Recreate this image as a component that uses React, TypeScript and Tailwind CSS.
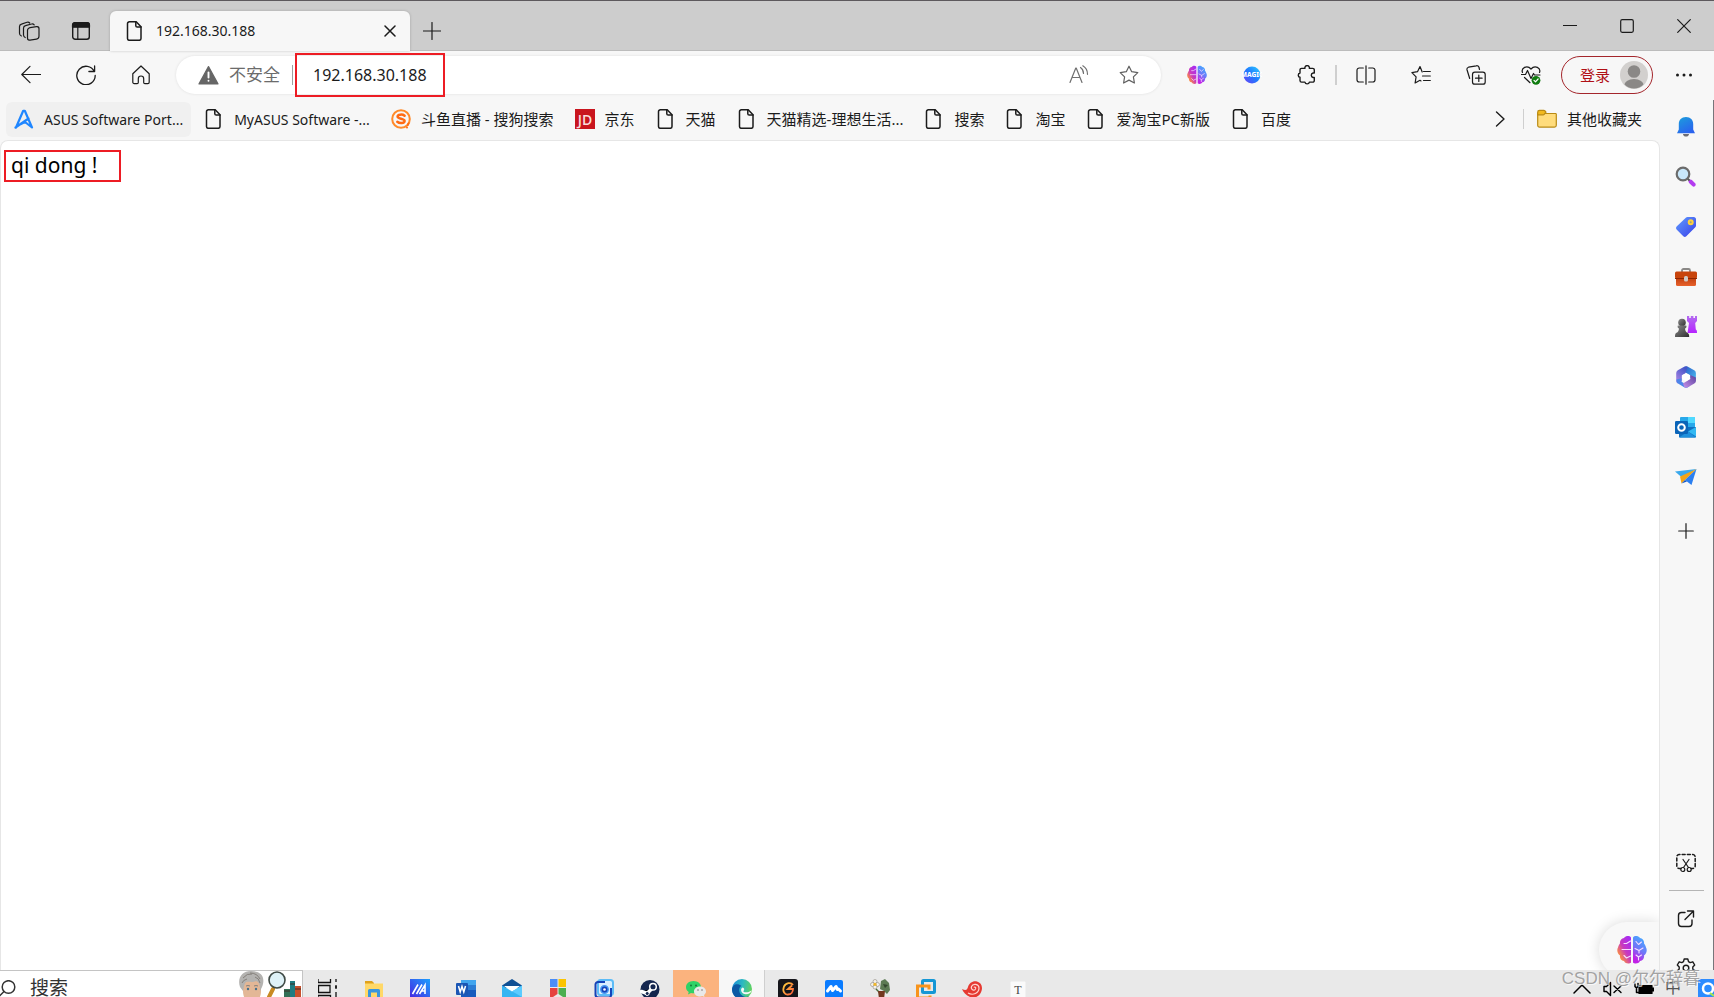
import type { ReactNode } from "react";

type IconProps = { children: ReactNode; className?: string; box?: string };

function Icon({ children, className = "size-5", box = "0 0 20 20" }: IconProps) {
  return (
    <svg
      viewBox={box}
      className={`shrink-0 ${className}`}
      fill="none"
      stroke="currentColor"
      strokeWidth="1.2"
      strokeLinecap="round"
      strokeLinejoin="round"
      aria-hidden="true"
    >
      {children}
    </svg>
  );
}

function FileIcon() {
  return (
    <Icon>
      <path strokeWidth="1.5" d="M4.4 .8h6.8l4.8 5v11.600a1.900 1.900 0 0 1-1.900 1.900H4.400a1.900 1.900 0 0 1-1.900-1.900V2.700A1.900 1.900 0 0 1 4.400.8z" />
      <path strokeWidth="1.5" d="M10.800 1v3.700c0 .8.6 1.400 1.400 1.400H16" />
    </Icon>
  );
}

function BrainIcon({ id, className }: { id: string; className: string }) {
  return (
    <Icon className={className} box="0 0 30 30">
      <defs>
        <linearGradient id={`${id}-l`} x1="0.9" y1="0.1" x2="0.2" y2="0.9">
          <stop offset="0" stopColor="#a82cf2" />
          <stop offset="0.5" stopColor="#c838c0" />
          <stop offset="0.9" stopColor="#f98a48" />
        </linearGradient>
        <linearGradient id={`${id}-r`} x1="0.7" y1="0" x2="0.3" y2="1">
          <stop offset="0.1" stopColor="#4aa3ff" />
          <stop offset="0.5" stopColor="#6f78f8" />
          <stop offset="0.9" stopColor="#c022e6" />
        </linearGradient>
      </defs>
      <path stroke="none" fill={`url(#${id}-l)`} d="M14 2.5v25C12.500 29 8.500 29 7 26 4 25.500 2.500 23 3 20.500.500 19-.5 15 1 12.500 1.500 10.500 2.500 9 3 8.500 2.500 5.500 4.500 3.500 7 3 9 .5 12.500.5 14 2.500z" />
      <path stroke="none" fill={`url(#${id}-r)`} d="M16 2.500v25c1.500 1.500 5.500 1.500 7-1.500 3-.5 4.500-3 4-5.500 2.500-1.500 3.500-5.500 2-8-.5-2-1.500-3.500-2-4 .5-3-1.500-5-4-5.500-2-2.500-5.500-2.500-7-.5z" />
      <g stroke="#f7dcff" strokeWidth="1.100">
        <path d="M7 8.500h2.500L13.500 6M5 14.500h8.500M7 20.500l2.500 2.500 4-2" />
        <path d="M19 6.500l2.500 3 3-2.500M18 13.500l4 2 4-2.500M22 15.500v2.500M19 20l2.500 2 3-2M21.500 22v3" />
      </g>
    </Icon>
  );
}

function WorkspacesIcon() {
  return (
    <Icon className="size-[22px]" box="0 0 22 22">
      <rect x="9.500" y="7" width="11.500" height="12.500" rx="2.500" transform="skewY(-9) translate(0 2.500)" />
      <path d="M7.200 17.500A3 3 0 0 1 5.500 15V8.200a2.600 2.600 0 0 1 2-2.500l6-1.700a2.500 2.500 0 0 1 2.700.8" />
      <path d="M3.400 16A3 3 0 0 1 1.500 13.200V6.600a2.600 2.600 0 0 1 2-2.500l5.500-1.800a2.500 2.500 0 0 1 2.700.7" />
    </Icon>
  );
}

function TabsIcon() {
  return (
    <Icon>
      <rect x="1.700" y="1.700" width="16.600" height="16.600" rx="2.500" strokeWidth="1.400" />
      <path d="M1.500 6.200V4A2.500 2.500 0 0 1 4 1.500h12A2.500 2.500 0 0 1 18.500 4v2.200z" fill="currentColor" />
      <path d="M6.800 6v12" />
    </Icon>
  );
}

function TitleBar() {
  return (
    <header className="flex h-[51px] shrink-0 border-t border-b border-t-[#5d595d] border-b-[#bcbcbc] bg-[#cdcdcd]">
      <button aria-label="工作区" className="ml-[3px] flex w-[51px] items-center justify-center pt-2.5">
        <WorkspacesIcon />
      </button>
      <button aria-label="标签页操作" className="flex w-[54px] items-center justify-center pt-2.5">
        <TabsIcon />
      </button>
      <div className="relative mt-[10px] -mb-px ml-0.5 flex w-[300px] items-center rounded-t-md bg-[#f7f7f7] pr-2 pb-px pl-[15px] shadow-[0_0_3px_#0003]">
        <FileIcon />
        <span className="ml-[11px] flex-1 text-[14px]">192.168.30.188</span>
        <button aria-label="关闭标签页" className="flex size-6 items-center justify-center">
          <Icon className="size-3" box="0 0 12 12">
            <path strokeWidth="1.500" d="M1 1l10 10M11 1L1 11" />
          </Icon>
        </button>
      </div>
      <button aria-label="新建标签页" className="flex w-11 items-center justify-center pt-2.5">
        <Icon className="size-[18px]" box="0 0 18 18">
          <path d="M9 .5v17M.5 9h17" />
        </Icon>
      </button>
      <div className="mr-0.5 ml-auto flex">
        <button aria-label="最小化" className="flex w-[57px] items-center justify-center">
          <Icon className="size-[14px]" box="0 0 14 14"><path d="M.5 6.500h13" /></Icon>
        </button>
        <button aria-label="最大化" className="flex w-[57px] items-center justify-center">
          <Icon className="size-[14px]" box="0 0 14 14"><rect x=".7" y=".7" width="12.600" height="12.600" rx="1.500" /></Icon>
        </button>
        <button aria-label="关闭" className="flex w-[57px] items-center justify-center">
          <Icon className="size-[14px]" box="0 0 14 14"><path d="M.7.7l12.600 12.600M13.300.7L.7 13.300" /></Icon>
        </button>
      </div>
    </header>
  );
}

function ToolButton({ label, children }: { label: string; children: ReactNode }) {
  return (
    <button aria-label={label} className="flex h-[38px] w-[55px] shrink-0 items-center justify-center">
      {children}
    </button>
  );
}

function AddressBar() {
  return (
    <div className="relative ml-2 flex h-[38px] flex-1 items-center rounded-full bg-white pl-[22px] shadow-[0_0_3px_#0000001a]">
      <Icon className="size-[21px]" box="0 0 20 20">
        <path fill="#666" stroke="#666" d="M10 1.500L19 18H1z" />
        <path stroke="#fff" strokeWidth="1.800" d="M10 7v5M10 15v.1" />
      </Icon>
      <label htmlFor="url" className="ml-2.5 text-[17px] text-[#6b6b6b]">不安全</label>
      <span className="ml-3 h-5 w-px bg-[#a0a0a0]" />
      <input id="url" defaultValue="192.168.30.188" className="ml-5 min-w-0 flex-1 bg-transparent text-[16px] outline-none" />
      <span className="pointer-events-none absolute -top-[3px] left-[119px] h-[44px] w-[150px] border-2 border-[#ed1c24]" />
      <button aria-label="朗读此页内容" className="flex w-[50px] justify-center text-[#707070]">
        <Icon>
          <path d="M1 17.500L6.800 3h.4L13 17.500M3.200 12.500h7.600M11.500 2.500q3 2 3 6M13.800 .8q4.700 2.700 4.700 8.500" />
        </Icon>
      </button>
      <button aria-label="将此页添加到收藏夹" className="mr-[7px] flex w-[50px] justify-center text-[#606060]">
        <Icon>
          <path d="M10 1.200l2.700 5.500 6.100.9-4.400 4.300 1 6.100L10 15.100 4.600 18l1-6.100L1.200 7.600l6.100-.9z" />
        </Icon>
      </button>
    </div>
  );
}

function Toolbar() {
  return (
    <div className="flex h-[49px] shrink-0 items-start pt-[5px] pr-[3px] pl-[3px]">
      <ToolButton label="返回">
        <Icon><path d="M19.500 9.500H.8M9 1.300L.8 9.500 9 17.700" /></Icon>
      </ToolButton>
      <ToolButton label="刷新">
        <Icon><path strokeWidth="1.300" d="M18.300 6.500A9.200 9.200 0 1 0 19.200 10.500M18.600 1v5.500h-5.700" /></Icon>
      </ToolButton>
      <ToolButton label="主页">
        <Icon><path d="M1.800 8.800L10 1l8.200 7.800v8.400c0 .8-.6 1.400-1.400 1.400h-2.900c-.7 0-1.200-.5-1.200-1.200v-3.700a2.700 2.700 0 0 0-5.400 0v3.700c0 .7-.5 1.200-1.200 1.200H3.200c-.8 0-1.400-.6-1.400-1.400z" /></Icon>
      </ToolButton>
      <AddressBar />
      <div className="ml-2 flex">
        <ToolButton label="扩展 AI">
          <BrainIcon id="ext" className="size-5" />
        </ToolButton>
        <ToolButton label="Magic">
          <Icon>
            <defs>
              <linearGradient id="magic" x1="1" y1="0" x2="0" y2="1">
                <stop offset="0" stopColor="#2fd0ff" />
                <stop offset=".5" stopColor="#1f7bff" />
                <stop offset="1" stopColor="#6a3df5" />
              </linearGradient>
            </defs>
            <circle cx="10" cy="10" r="8.500" fill="url(#magic)" stroke="none" />
            <text x="10" y="12.300" textAnchor="middle" fontSize="6.500" fontWeight="800" fill="#fff" stroke="none">MAGIC</text>
          </Icon>
        </ToolButton>
        <ToolButton label="扩展">
          <Icon>
            <path strokeWidth="1.400" d="M4.600 3.400h3.300a2.300 2.300 0 1 1 4.500 0h3.300a1.600 1.600 0 0 1 1.600 1.600v3h-1.200a2.300 2.300 0 0 0 0 4.500h1.200v3a1.600 1.600 0 0 1-1.600 1.600h-3.300a2.300 2.300 0 0 1-4.500 0H4.600A1.600 1.600 0 0 1 3 15.500v-3.200a2.200 2.200 0 0 1 0-4.300V5a1.600 1.600 0 0 1 1.600-1.600z" />
          </Icon>
        </ToolButton>
        <span className="mx-px mt-[9px] h-5 w-0.5 bg-[#cfcfcf]" />
        <ToolButton label="分屏">
          <Icon><path d="M7.300 3H3.200A2.200 2.200 0 0 0 1 5.200v9.600A2.200 2.200 0 0 0 3.200 17h4.100M12.700 3h4.100A2.200 2.200 0 0 1 19 5.200v9.600a2.200 2.200 0 0 1-2.200 2.200h-4.100M10 .8v18.400" /></Icon>
        </ToolButton>
        <ToolButton label="收藏夹">
          <Icon><path d="M11.200 7L9 1.500 6.500 6.700.9 7.600l4.200 4.200-1 6.200L9 15.300l1 .6M12.500 6.500h6.800M11.500 11h7.800M12.500 15.500h6.800" /></Icon>
        </ToolButton>
        <ToolButton label="集锦">
          <Icon>
            <rect x="6.500" y="7.200" width="12.700" height="12" rx="2.300" />
            <path d="M12.800 10v6.500M9.500 13.200h6.600M3.700 13.500L1 4.700a2.200 2.200 0 0 1 1.500-2.500L10.300.8a2.200 2.200 0 0 1 2.700 1.700l.5 2" />
          </Icon>
        </ToolButton>
        <ToolButton label="浏览器概要">
          <Icon>
            <path d="M1.500 7.500C-.2 3 6 -.6 10 4c4-4.600 10.200-1 8.500 3.500M.5 9.500h4l2-4 3.500 8 2.500-5 1 1.500h5.500M3.500 12.500l5.500 5.200" />
            <circle cx="15" cy="15.300" r="4.400" fill="#107c10" stroke="none" />
            <path stroke="#fff" d="M13 15.400l1.500 1.400 2.600-2.800" />
          </Icon>
        </ToolButton>
      </div>
      <button className="ml-[3px] flex h-[38px] w-[92px] shrink-0 items-center justify-between rounded-full border border-[#a4262c] pr-1 pl-[18px] text-[15px] text-[#b01015]">
        登录
        <svg viewBox="0 0 28 28" className="size-7" aria-hidden="true">
          <defs><clipPath id="avatar"><circle cx="14" cy="14" r="13.500" /></clipPath></defs>
          <circle cx="14" cy="14" r="14" fill="#d2d0ce" />
          <circle cx="14" cy="10.500" r="6.300" fill="#8a8886" />
          <ellipse cx="14" cy="25" rx="10" ry="7" fill="#8a8886" clipPath="url(#avatar)" />
        </svg>
      </button>
      <span className="w-[3px]" />
      <ToolButton label="设置及其他">
        <Icon><g fill="currentColor" stroke="none"><circle cx="3.500" cy="10" r="1.500" /><circle cx="10" cy="10" r="1.500" /><circle cx="16.500" cy="10" r="1.500" /></g></Icon>
      </ToolButton>
    </div>
  );
}

const asus = (
  <Icon>
    <path stroke="#1f86ff" strokeWidth="2.200" d="M2 18.500L9.200 1.800h1.600L18 18.500l-7-5.500M1.500 18.500L14.500 9.500M5.500 15.700l5.500-2.700" />
  </Icon>
);

const sogou = (
  <Icon>
    <circle cx="10" cy="10" r="8.800" stroke="#ff8a2a" strokeWidth="2" />
    <path stroke="#ff6a13" strokeWidth="2.500" d="M13.600 6.700C11.500 5 6.500 5.200 6.600 7.800c.1 2.400 7 1.600 7 4.200 0 2.500-5.200 2.600-7.300.8" />
    <path stroke="#ff6a13" strokeWidth="2" d="M17.500 14.500l-.6 1.500M16 18.500v.1" />
  </Icon>
);

const jd = (
  <svg viewBox="0 0 20 20" className="size-5 shrink-0" aria-hidden="true">
    <rect width="20" height="20" fill="#c9151e" />
    <text x="10" y="15.500" textAnchor="middle" fontSize="14" fontWeight="600" fill="#f9dcdd" fontFamily="Open Sans, sans-serif">JD</text>
  </svg>
);

const bookmarks: { label: string; icon?: ReactNode; latin?: boolean; active?: boolean }[] = [
  { label: "ASUS Software Port...", icon: asus, latin: true, active: true },
  { label: "MyASUS Software -...", latin: true },
  { label: "斗鱼直播 - 搜狗搜索", icon: sogou },
  { label: "京东", icon: jd },
  { label: "天猫" },
  { label: "天猫精选-理想生活..." },
  { label: "搜索" },
  { label: "淘宝" },
  { label: "爱淘宝PC新版" },
  { label: "百度" },
];

function BookmarksBar() {
  return (
    <nav className="flex h-10 shrink-0 items-center gap-[5px] pb-0.5 pl-1.5">
      {bookmarks.map((b) => (
        <a
          key={b.label}
          href="#"
          className={`flex h-[35px] shrink-0 items-center gap-2.5 rounded-md px-2 whitespace-nowrap ${b.latin ? "text-[14px]" : "text-[15px]"} ${b.active ? "bg-[#f0f0f0]" : ""}`}
        >
          {b.icon ?? <FileIcon />}
          {b.label}
        </a>
      ))}
      <button aria-label="更多收藏" className="ml-auto flex w-9 justify-center">
        <Icon className="size-4" box="0 0 16 16"><path strokeWidth="1.400" d="M4.500 1l7.500 7-7.500 7" /></Icon>
      </button>
      <span className="h-5 w-px bg-[#cfcfcf]" />
      <a href="#" className="mr-[10px] flex h-[35px] items-center gap-2.5 px-2 text-[15px]">
        <Icon>
          <path fill="#ffdc7c" stroke="#b98a14" d="M.7 4.500h18a.8.8 0 0 1 .6.8v11a1.800 1.800 0 0 1-1.800 1.800h-15A1.800 1.800 0 0 1 .7 16.300z" />
          <path fill="#f2b91d" stroke="#b98a14" d="M.7 5.800V3.200A1.800 1.800 0 0 1 2.500 1.400h4.200c.6 0 1 .2 1.400.6L9 3.200 7.200 5.300a1.500 1.500 0 0 1-1.100.5z" />
        </Icon>
        其他收藏夹
      </a>
    </nav>
  );
}

function SideButton({ label, children }: { label: string; children: ReactNode }) {
  return (
    <button aria-label={label} className="flex h-[50px] w-full shrink-0 items-center justify-center">
      <svg viewBox="0 0 22 22" className="size-[22px]" aria-hidden="true">{children}</svg>
    </button>
  );
}

function Sidebar() {
  return (
    <aside className="flex w-[54px] shrink-0 flex-col overflow-hidden border-r border-[#77757a] pt-0.5 pr-px">
      <svg className="absolute size-0" aria-hidden="true">
        <defs>
          <linearGradient id="bell" x1="0" y1="0" x2=".6" y2="1"><stop offset="0" stopColor="#1ba0dc" /><stop offset="1" stopColor="#2a63ee" /></linearGradient>
          <linearGradient id="tag" x1="0" y1="0" x2="1" y2="1"><stop offset="0" stopColor="#5f9dff" /><stop offset="1" stopColor="#3a3fe8" /></linearGradient>
          <linearGradient id="box" x1="0" y1="0" x2="0" y2="1"><stop offset="0" stopColor="#b83808" /><stop offset="1" stopColor="#e8622c" /></linearGradient>
          <linearGradient id="rook" x1="0" y1="0" x2="0" y2="1"><stop offset="0" stopColor="#b36bf0" /><stop offset="1" stopColor="#b624ff" /></linearGradient>
          <linearGradient id="pawn" x1="0" y1="0" x2="1" y2="1"><stop offset="0" stopColor="#8a8a8a" /><stop offset="1" stopColor="#2f2f2f" /></linearGradient>
          <linearGradient id="m365-a" x1="0" y1="1" x2=".6" y2="0"><stop offset="0" stopColor="#b88be8" /><stop offset="1" stopColor="#4656c8" /></linearGradient>
          <linearGradient id="m365-b" x1="0" y1="0" x2="1" y2="1"><stop offset="0" stopColor="#2a58c8" /><stop offset="1" stopColor="#4cc0f0" /></linearGradient>
          <linearGradient id="m365-c" x1="0" y1="1" x2="1" y2="0"><stop offset="0" stopColor="#c792ea" /><stop offset="1" stopColor="#5a3f9e" /></linearGradient>
        </defs>
      </svg>
      <SideButton label="通知">
        <path fill="url(#bell)" d="M11 1c4.500 0 7.200 3.200 7.200 7v5.500l1.800 3.700H2l1.800-3.700V8C3.800 4.200 6.500 1 11 1z" />
        <path fill="#6d6d75" d="M8 18h6c0 1.500-1.200 2.600-3 2.600S8 19.500 8 18z" />
      </SideButton>
      <SideButton label="搜索">
        <path stroke="#b33cf0" strokeWidth="4" strokeLinecap="round" d="M15.500 15.500l3.200 3.200" />
        <path stroke="#555" strokeWidth="2" d="M12.500 12.500l2 2" />
        <circle cx="8" cy="8" r="6.300" fill="#c9e8fb" stroke="#6b6b6b" strokeWidth="2.200" />
      </SideButton>
      <SideButton label="购物">
        <path fill="url(#tag)" d="M12.500 1h6.300c1.200 0 2.200 1 2.200 2.200v6.300c0 .7-.2 1.200-.7 1.700l-9 9a2.200 2.200 0 0 1-3 0L1.600 13.500a2.200 2.200 0 0 1 0-3l9.200-8.800A2.500 2.500 0 0 1 12.500 1z" />
        <circle cx="15.700" cy="6.200" r="2" fill="#a5a07a" stroke="#ffd23c" strokeWidth="2" />
      </SideButton>
      <SideButton label="工具">
        <path fill="none" stroke="#8a8886" strokeWidth="1.800" d="M7 6V4.500C7 3.700 7.700 3 8.500 3h5c.8 0 1.500.7 1.500 1.500V6" />
        <rect x="1" y="10" width="20" height="10" rx="1.500" fill="url(#box)" />
        <rect x="0" y="5.500" width="22" height="7" rx="1.500" fill="#c8440c" />
        <path fill="#8f2500" d="M0 12h22v1H0z" />
        <rect x="9" y="10" width="4" height="5.500" rx="1.500" fill="#cfcac6" />
      </SideButton>
      <SideButton label="游戏">
        <path fill="url(#rook)" d="M12 0h2.200v2h1.600V0h2.600v2H20V0h2v5l-1.800 2 .6 6.500c1 .4 1.200 1.400 1.200 3.500H12.500L14 7l-2-2z" />
        <circle cx="7" cy="6.500" r="3.800" fill="url(#pawn)" />
        <path fill="url(#pawn)" d="M2.800 9.500h8.400c1 2-.8 3-1.200 3 .2 2.500 1 3.500 2.500 4.300 1.200.8 1.700 1.700 1.700 4.200H0c0-2.500.3-3.500 1.500-4.200C3 16 3.800 15 4 12.500c-.6 0-2-1-1.200-3z" />
      </SideButton>
      <SideButton label="Microsoft 365">
        <path fill="url(#m365-b)" d="M9.200 .7a4 4 0 0 1 3.700 0l6.300 3.600A3.300 3.300 0 0 1 20.900 7v8l-5.600-3V9.300L9.500 6z" />
        <path fill="url(#m365-a)" d="M12.500 .6C11 .2 9.600.5 8.700 1L2.800 4.300A3.300 3.300 0 0 0 1.200 7v8c0 1 .6 2 1.600 2.600l4-2.300V9.300L10.500 7.200z" />
        <path fill="#4d86ea" d="M1.500 13.500v1.800c.1 1 .6 1.800 1.500 2.300l6.200 3.600c1.200.7 2.500.7 3.700 0l1.600-1-8-4.500v-3.500z" />
        <path fill="url(#m365-c)" d="M20.900 11.500V15c0 1.200-.6 2-1.600 2.600l-6.400 3.700c-1 .5-2.500.5-3.500 0L8 17.500l7.300-4.500V9z" />
        <path fill="#fff" d="M11 7.200l3.800 2v3.900L11 15.300l-3.800-2.200V9.200z" />
      </SideButton>
      <SideButton label="Outlook">
        <rect x="5" y="1" width="15" height="13" rx="1" fill="#28a8ea" />
        <path fill="#50d9ff" d="M13 1h7v6h-7z" />
        <path fill="#0f6fc0" d="M4 11h17v9.500a1 1 0 0 1-1 1H5a1 1 0 0 1-1-1z" />
        <path fill="#32b8f2" d="M21 11v9.500l-8-5z" />
        <path fill="#1f90dc" d="M4 21.500l9-6 8 6z" />
        <rect x="0" y="5" width="13" height="13" rx="1.300" fill="#0a64b8" />
        <circle cx="6.500" cy="11.500" r="3.300" fill="none" stroke="#fff" strokeWidth="2" />
      </SideButton>
      <SideButton label="Drop">
        <path fill="#39a8ec" d="M0 5.500L21.500 3 7 11.500z" />
        <path fill="#f2a416" d="M5 10.500L21.500 3 8.500 15.500 6.500 17.500z" />
        <path fill="#2b7ff0" d="M21.500 3L16.500 19 10 14z" />
        <path fill="#1558c8" d="M6.500 17.500l3.500-3.500 2 1.500z" />
      </SideButton>
      <button aria-label="自定义" className="flex h-[58px] shrink-0 items-center justify-center">
        <Icon className="size-4" box="0 0 16 16"><path d="M8 .7v14.600M.7 8h14.600" /></Icon>
      </button>
      <div className="mt-auto -mb-2 flex flex-col items-center">
        <button aria-label="屏幕截图" className="mb-[17px]">
          <Icon>
            <path strokeDasharray="3 2.200" strokeWidth="1.500" d="M5 15.500H3A2.500 2.500 0 0 1 .8 13V4A2.500 2.500 0 0 1 3 1.500h14A2.500 2.500 0 0 1 19.200 4v9a2.500 2.500 0 0 1-2.200 2.500h-2" />
            <path d="M7 6.500l5.500 8M13 6.500l-5.500 8" />
            <circle cx="6.800" cy="16.500" r="2" /><circle cx="13.200" cy="16.500" r="2" />
          </Icon>
        </button>
        <span className="h-px w-[35px] bg-[#b5b5b5]" />
        <button aria-label="在新窗口中打开" className="mt-[18px] mb-[29px]">
          <Icon>
            <path strokeWidth="1.400" d="M9 3.500H5.500A3 3 0 0 0 2.500 6.500v8a3 3 0 0 0 3 3h7.500a3 3 0 0 0 3-3V11M11.500 2H17.500v6M17.300 2.200L9 10.500" />
          </Icon>
        </button>
        <button aria-label="设置">
          <Icon>
            <path strokeWidth="1.400" d="M8.200 1h3.600l.7 2.600 1.700 1 2.600-.8 1.900 3.200-1.900 1.900v2.200l1.900 1.900-1.900 3.200-2.600-.8-1.700 1-.7 2.600H8.200l-.7-2.600-1.700-1-2.600.8L1.300 13l1.900-1.900V8.900L1.300 7l1.900-3.200 2.600.8 1.700-1z" />
            <circle cx="10" cy="10" r="2.800" strokeWidth="1.400" />
          </Icon>
        </button>
      </div>
    </aside>
  );
}

function Page() {
  return (
    <main className="relative min-h-0 flex-1 overflow-hidden rounded-t-lg border border-b-0 border-[#e6e6e6] bg-white">
      <p className="mt-[9px] ml-[3px] h-8 w-[117px] border-2 border-[#ed1c24] pl-[5px] text-[21px] leading-[26px] text-black">qi dong !</p>
      <button aria-label="AI 助手" className="absolute right-0 -bottom-2 flex h-14 w-[60px] items-center rounded-l-full bg-[#f8f8f8] pl-[18px] shadow-[0_0_14px_#00000026]">
        <BrainIcon id="float" className="size-[30px]" />
      </button>
    </main>
  );
}

const tasks: { name: string; art: ReactNode; state?: "alert" | "active" }[] = [
  {
    name: "任务视图",
    art: <path fill="none" stroke="#111" strokeWidth="1.300" d="M0 0v3.500h12.500V0M.5 6.500h11.500v7H.5zM0 20v-3.500h12.500V20M18 0v3M18 6v4M18 13v6M17 8h2" />,
  },
  {
    name: "文件资源管理器",
    art: (
      <>
        <path fill="#e0a11b" d="M1 2h7l2 2v3H1z" />
        <path fill="#ffd868" d="M1 4.500h18V19H1z" />
        <path fill="#3a96dd" d="M4 19v-7.500A1.500 1.500 0 0 1 5.500 10h9a1.500 1.500 0 0 1 1.500 1.500V19h-3v-5.500H7V19z" />
      </>
    ),
  },
  {
    name: "MyASUS",
    art: (
      <>
        <path fill="url(#myasus)" d="M0 0h20v20H0z" />
        <path stroke="#fff" strokeWidth="1.600" fill="none" d="M2.500 15L8 5.500M6.500 15L12 5.500M9.500 15L15 6v9M11 12h4" />
      </>
    ),
  },
  {
    name: "Word",
    art: (
      <>
        <path fill="#41a5ee" d="M5 1h15v5H5z" /><path fill="#2b7cd3" d="M5 6h15v5H5z" /><path fill="#185abd" d="M5 11h15v8H5z" />
        <rect y="4" width="12" height="12" rx="1" fill="#1a56b4" />
        <path stroke="#fff" strokeWidth="1.500" fill="none" d="M2.500 7l1.700 6L6 7.500 7.800 13l1.700-6" />
      </>
    ),
  },
  {
    name: "邮件",
    art: (
      <>
        <path fill="#0f4f94" d="M10 0l10 6.500V9H0V6.500z" /><path fill="#fff" d="M2 7h16l-8 6z" />
        <path fill="#36b5f2" d="M0 6.500l10 6 10-6V20H0z" /><path fill="#5ccbff" d="M0 6.500L20 18V6.500l-10 6z" />
      </>
    ),
  },
  {
    name: "书签",
    art: (
      <>
        <path fill="#4a8df6" d="M2 0h7.500v8H2z" /><path fill="#fbc400" d="M10.500 0H18v8h-7.500z" />
        <path fill="#e6413c" d="M2 9h7.500v6L2 20z" /><path fill="#4caf50" d="M10.500 9H18v11l-7.500-5z" />
      </>
    ),
  },
  {
    name: "截图",
    art: (
      <>
        <rect x="4" y="1" width="15" height="15" rx="2.500" fill="#d9efff" stroke="#5cbcf7" strokeWidth="2" />
        <path fill="none" stroke="#1443b8" strokeWidth="2" d="M11 3H4a2.500 2.500 0 0 0-2.500 2.500v10A3 3 0 0 0 4.500 18.500h10a2.500 2.500 0 0 0 2.500-2.500V9" />
        <circle cx="10.500" cy="10.500" r="3.700" fill="#1443b8" stroke="#4798f0" strokeWidth="1.500" /><circle cx="10.500" cy="10.500" r="1.300" fill="#fff" />
      </>
    ),
  },
  {
    name: "Steam",
    art: (
      <>
        <circle cx="10" cy="10.500" r="9.500" fill="#14264e" />
        <path stroke="#fff" strokeWidth="3.500" strokeLinecap="round" d="M1.500 12.500l5.500 2 5-5" />
        <circle cx="13" cy="7.700" r="3.300" fill="#14264e" stroke="#fff" strokeWidth="1.500" />
        <circle cx="7.200" cy="14.500" r="2" fill="#14264e" stroke="#fff" />
      </>
    ),
  },
  {
    name: "微信",
    state: "alert",
    art: (
      <>
        <path fill="#2fd266" d="M7.500 2C3 2 0 4.800 0 8.200c0 2 1 3.600 2.700 4.800L2 15.500l3-1.500c4 1 10-1 10-5.800C15 4.800 12 2 7.500 2z" />
        <path fill="#e9e9e9" d="M14 7.500c-3.500 0-6 2.200-6 5s2.500 5 6 5l2.500-.5 2 1-.5-2c1.300-1 2-2.200 2-3.500 0-2.800-2.500-5-6-5z" />
        <circle cx="5" cy="6.500" r="1" fill="#147a38" /><circle cx="10" cy="6.500" r="1" fill="#147a38" />
        <circle cx="12" cy="11" r=".8" fill="#777" /><circle cx="16" cy="11" r=".8" fill="#777" />
      </>
    ),
  },
  {
    name: "Microsoft Edge",
    state: "active",
    art: (
      <>
        <circle cx="10" cy="10" r="10" fill="url(#edge)" />
        <path fill="#0c59a4" d="M0 11C0 5 6 4 9.500 7 7 8 6 12 9 15.500c2 2.300 5 3 8 1.800A10 10 0 0 1 0 11z" />
        <path fill="#f7f7f7" d="M10.500 8.500c2 .5 2.200 2.500 1 3.500-1 1.200 4 2.500 8-.5-.5 2.500-2.500 3.700-5.500 3.700-4.500 0-6.500-5-3.500-6.700z" />
      </>
    ),
  },
  {
    name: "G",
    art: (
      <>
        <rect width="20" height="20" rx="3" fill="#15151a" />
        <path fill="none" stroke="url(#gold)" strokeWidth="1.800" d="M15 6C13 3 8 3.500 6 7.500 4 12.500 7 16 10 15.500c3 0 5-2.500 5-5.500h-5l4-3.500" />
      </>
    ),
  },
  {
    name: "腾讯会议",
    art: (
      <>
        <rect x="1" y="1" width="18" height="18" rx="2" fill="#0a7cff" />
        <path fill="none" stroke="#fff" strokeWidth="3" strokeLinecap="round" strokeLinejoin="round" d="M3.500 12l3.500-4.500 1.500 4L12 7.500l1.500 3 1-.5 2 2" />
      </>
    ),
  },
  {
    name: "植物大战僵尸",
    art: (
      <>
        <path fill="#5d7b54" d="M11 2l4-2 4 4 1 7-3 4-3-3-4-2z" /><path fill="#33472e" d="M13 5l5 1-3 3z" />
        <g fill="#f4f1ea" stroke="#8f8a80" strokeWidth=".6"><circle cx="5" cy="2.500" r="2" /><circle cx="2.500" cy="5.500" r="2" /><circle cx="7.500" cy="5.500" r="2" /><circle cx="5" cy="8" r="2" /></g>
        <circle cx="5" cy="5.300" r="1.600" fill="#f0b72b" />
        <path stroke="#4b6b3f" strokeWidth="1.500" d="M6 10l4 4" /><path fill="#73381f" d="M8 12h7l-1 8H9z" />
      </>
    ),
  },
  {
    name: "VMware",
    art: (
      <>
        <rect x="6.500" y="1.500" width="12" height="12" rx="1" fill="none" stroke="#1597d5" strokeWidth="3" />
        <path fill="none" stroke="#f7941d" strokeWidth="3" d="M13 10.500V7H1.500v12H14v-2.500" />
      </>
    ),
  },
  {
    name: "海螺",
    art: (
      <>
        <path fill="#e63a32" d="M0 10c4 2 5 1 6-2 1-4 5-6.500 9-5.500 4 1 6 5 4.500 9.500C18 17 13 20 8 18c-4-1.500-7-5-8-8z" />
        <path fill="none" stroke="#ffd5d0" strokeWidth="1.200" d="M6 14c5 3 11 0 11-5 0-4-6-5-7.500-1.500-1 3 2.500 5 4 2.500.8-1.500-.8-2.500-1.500-1.500" />
      </>
    ),
  },
  {
    name: "Typora",
    art: (
      <>
        <rect x="2.500" y="2.500" width="15" height="17" rx="1" fill="#fafafa" />
        <text x="10" y="14.500" textAnchor="middle" fontSize="12" fill="#444" fontFamily="Liberation Serif, serif">T</text>
      </>
    ),
  },
];

function SearchHighlight() {
  return (
    <svg viewBox="0 0 64 38" className="h-[38px] w-16" aria-hidden="true">
      <path fill="#e3b796" d="M5 10c0-5 18-5 18 0v12c0 8-5 12-9 12s-9-4-9-12z" />
      <path fill="#b4b3b1" d="M2 18C-1 9 4 2 13 2c10 0 15 6 11 16l-2 4c0-7-1-9-4-10-4 2-7 0-10 1-2 2-2 5-3 9z" />
      <path fill="none" stroke="#85807b" d="M5 9q4-5 9-4M12 4q7 0 10 6M4 14q1-3 5-4M17 8q4 1 5 6" />
      <path fill="none" stroke="#85807b" d="M8 17q2-1 4 0M16 17q2-1 4 0" />
      <circle cx="10" cy="20" r="1.200" fill="#46718c" /><circle cx="18" cy="20" r="1.200" fill="#46718c" />
      <path fill="#346f55" d="M46 20h6v16h-6z" /><path fill="#1f7c82" d="M52 12h5v24h-5z" /><path fill="#c8502c" d="M57 17h6v19h-6z" />
      <path stroke="#3c2c24" d="M46 22h6M52 15h5M57 20h6" />
      <path stroke="#c88a22" strokeWidth="4" strokeLinecap="round" d="M35 20l-4 8" />
      <circle cx="39" cy="11" r="8" fill="#dff2f8" stroke="#3f4a45" strokeWidth="1.600" />
    </svg>
  );
}

const taskState = { alert: "bg-[#fbb37e]", active: "bg-[#f7f7f7] border-r border-[#cfcfcf]" };

function Taskbar() {
  return (
    <footer className="relative h-[27px] shrink-0 overflow-hidden bg-[#e9e9e9]">
      <div className="flex h-10">
        <label className="flex w-[303px] shrink-0 items-center overflow-hidden border border-l-0 border-[#c4c4c4] bg-white pb-1 text-[#333]">
          <Icon className="-ml-px size-[17px]" box="0 0 17 17">
            <circle cx="9.500" cy="7" r="6.300" strokeWidth="1.500" /><path strokeWidth="1.500" d="M5 11.500L.5 16" />
          </Icon>
          <input placeholder="搜索" className="ml-[14px] min-w-0 flex-1 text-[19px] outline-none placeholder:text-[#333]" />
          <SearchHighlight />
        </label>
        <svg className="absolute size-0" aria-hidden="true">
          <defs>
            <linearGradient id="myasus" x1="1" y1="0" x2="0" y2="1"><stop offset="0" stopColor="#1aa0ff" /><stop offset="1" stopColor="#4a22e0" /></linearGradient>
            <linearGradient id="edge" x1="0" y1=".3" x2="1" y2=".5"><stop offset="0" stopColor="#1b8fd8" /><stop offset=".5" stopColor="#2cb9c0" /><stop offset="1" stopColor="#63d45a" /></linearGradient>
            <linearGradient id="gold" x1="0" y1="0" x2="1" y2="1"><stop offset="0" stopColor="#ffd23c" /><stop offset="1" stopColor="#ff5a3c" /></linearGradient>
          </defs>
        </svg>
        <div className="ml-0.5 flex">
          {tasks.map((t) => (
            <button key={t.name} aria-label={t.name} className={`flex w-[46px] shrink-0 justify-center pt-[9px] ${t.state ? taskState[t.state] : ""}`}>
              <svg viewBox="0 0 20 20" className="size-5">{t.art}</svg>
            </button>
          ))}
        </div>
        <div className="ml-auto flex gap-[11px] pt-[9px] text-black">
          <button aria-label="显示隐藏的图标" className="h-5"><Icon><path strokeWidth="1.500" d="M2 14l8-8 8 8" /></Icon></button>
          <button aria-label="音量" className="h-5"><Icon><path d="M1 7.500h2.500L7.500 3.500v13L3.500 12.500H1zM11 7l7 6.500M18 7l-7 6.500" strokeWidth="1.400" /></Icon></button>
          <button aria-label="电池" className="h-5">
            <Icon><path fill="currentColor" d="M5 6.500h13v8H5zM18.500 9h1v3h-1z" /><path d="M1 4.500v3q1.500 2 3 0v-3M2.500 9v4.500H5" strokeWidth="1.500" /></Icon>
          </button>
          <button aria-label="输入法" className="h-4 text-[16px] leading-4 text-[#555]">中</button>
          <button aria-label="QQ浏览器" className="ml-1.5 h-5">
            <svg viewBox="0 0 16 20" className="h-5 w-4"><path fill="#2c8cff" d="M2 0h14v20H0V2a2 2 0 0 1 2-2z" /><circle cx="10" cy="9.500" r="5" fill="none" stroke="#fff" strokeWidth="2.500" /><path stroke="#a5e84b" strokeWidth="2" d="M12 14l4 3" /></svg>
          </button>
        </div>
      </div>
    </footer>
  );
}

export default function App() {
  return (
    <div className="relative flex h-screen flex-col overflow-hidden bg-[#f7f7f7] font-['Noto_Sans','Noto_Sans_CJK_SC',sans-serif] text-[#1b1b1b]">
      <TitleBar />
      <Toolbar />
      <div className="flex min-h-0 flex-1">
        <div className="flex min-w-0 flex-1 flex-col">
          <BookmarksBar />
          <Page />
        </div>
        <Sidebar />
      </div>
      <Taskbar />
      <span className="pointer-events-none absolute right-[14px] bottom-[6px] font-['Liberation_Sans','Noto_Sans_CJK_SC',sans-serif] text-[17px] leading-6 text-[#8e8e8ecc] [text-shadow:1px_1px_0_#ffffffb3]">
        CSDN @尔尔辞暮
      </span>
    </div>
  );
}
